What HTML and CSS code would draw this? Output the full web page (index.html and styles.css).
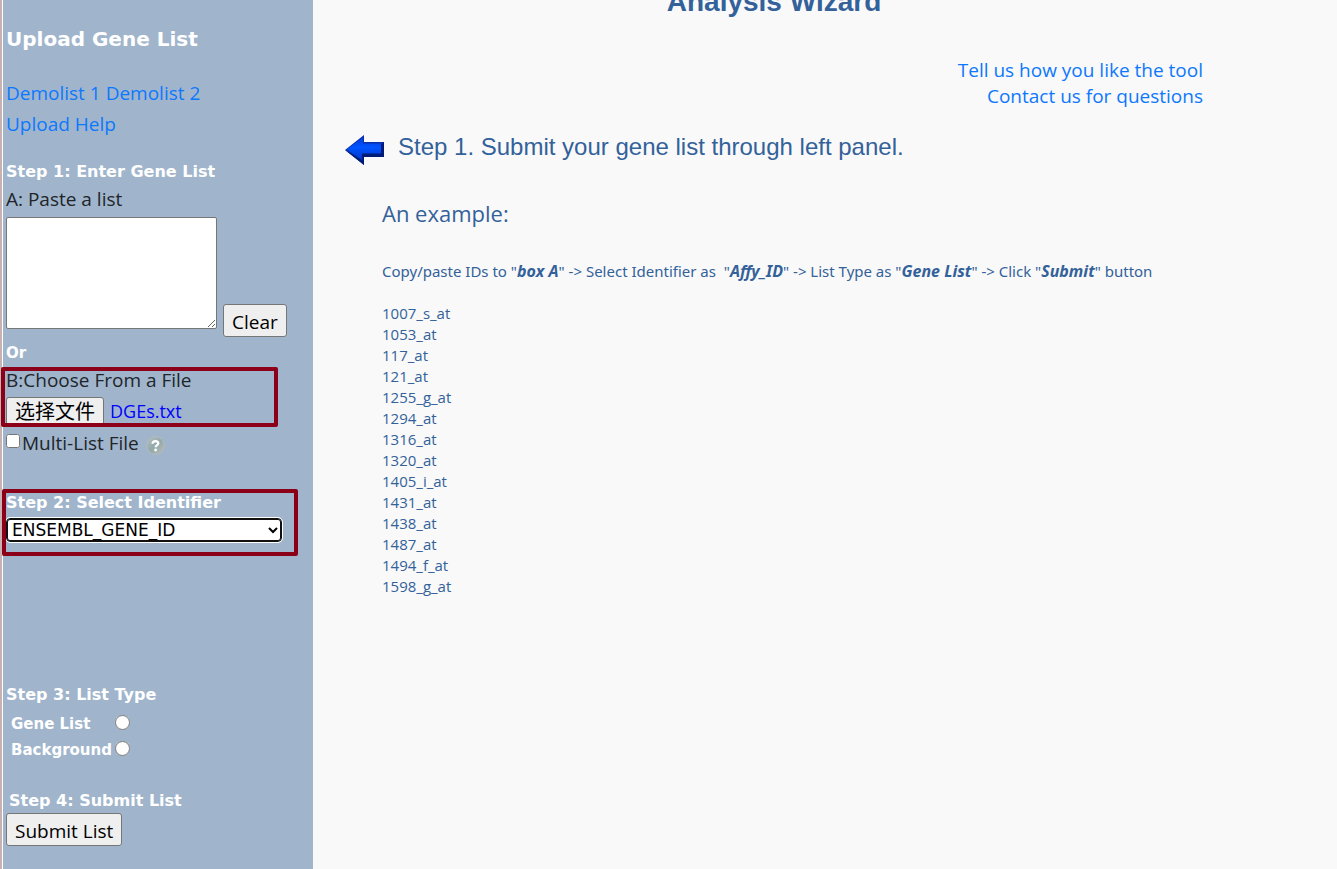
FILE: index.html
```html
<!DOCTYPE html>
<html lang="en">
<head>
<meta charset="utf-8">
<title>Analysis Wizard</title>
<link rel="stylesheet" href="styles.css">
</head>
<body>
<div class="layout">
  <form class="sidebar">
    <h2 class="sidebar-title">Upload Gene List</h2>
    <nav class="help-links">
      <div><a href="#demo1">Demolist 1</a> <a href="#demo2">Demolist 2</a></div>
      <div><a href="#help">Upload Help</a></div>
    </nav>

    <section>
      <h3 class="step">Step 1: Enter Gene List</h3>
      <label class="field-label" for="paste">A: Paste a list</label>
      <div class="paste-row">
        <textarea class="paste-box" id="paste"></textarea>
        <button class="button" type="reset">Clear</button>
      </div>
      <h3 class="step or">Or</h3>
      <div class="marked marked-file">
        <div class="field-label">B:Choose From a File</div>
        <div class="file-row">
          <label class="file-button">选择文件<input class="file-input" type="file"></label>
          <span class="file-name">DGEs.txt</span>
        </div>
      </div>
      <div class="multi-row">
        <input class="check" type="checkbox" id="multi">
        <label for="multi">Multi-List File</label>
        <svg class="help-icon" viewBox="0 0 19 19" aria-hidden="true">
          <defs><linearGradient id="g" x1="0" y1="0" x2="1" y2="1"><stop offset="0" stop-color="#b5c3c4"/><stop offset=".5" stop-color="#93a8aa"/><stop offset="1" stop-color="#bcbfba"/></linearGradient></defs>
          <circle cx="9.5" cy="9.5" r="8.8" fill="url(#g)" stroke="#b4bcbc"/>
          <path d="M6.6 7.8C6.6 4.2 12.5 4.4 12.3 7.5C12.2 9.2 9.6 9.2 9.6 11.3" fill="none" stroke="#fff" stroke-width="2.3"/>
          <circle cx="9.6" cy="14" r="1.4" fill="#fff"/>
        </svg>
      </div>
    </section>

    <section class="marked marked-identifier">
      <h3 class="step"><label for="identifier">Step 2: Select Identifier</label></h3>
      <select class="identifier" id="identifier"><option>ENSEMBL_GENE_ID</option></select>
    </section>

    <section class="list-type">
      <h3 class="step">Step 3: List Type</h3>
      <div class="radio-grid">
        <label for="genelist">Gene List</label><input class="radio" type="radio" name="type" id="genelist">
        <label for="background">Background</label><input class="radio" type="radio" name="type" id="background">
      </div>
    </section>

    <section class="submit">
      <h3 class="step step-submit">Step 4: Submit List</h3>
      <button class="button" type="button">Submit List</button>
    </section>
  </form>

  <main class="main">
    <h1 class="title">Analysis Wizard</h1>
    <div class="contact">
      <div><a href="#feedback">Tell us how you like the tool</a></div>
      <div><a href="#contact">Contact us for questions</a></div>
    </div>
    <div class="instruction">
      <svg class="arrow" viewBox="0 0 39 30" aria-hidden="true">
        <defs>
          <linearGradient id="shaft" x1="0" y1="0" x2="0" y2="1"><stop offset="0" stop-color="#0038d8"/><stop offset=".45" stop-color="#0054ff"/><stop offset="1" stop-color="#0034c8"/></linearGradient>
        </defs>
        <path d="M0 15L19 0V7H39V22H19V30Z" fill="#0a2fa8"/>
        <path d="M0 15L19 30V22H39V7L35 10V18H17V25Z" fill="#001c78"/>
        <path d="M2 14.5L18 2V8.5H36V18.5H17V25Z" fill="url(#shaft)"/>
      </svg>
      <h2 class="instruction-text">Step 1. Submit your gene list through left panel.</h2>
    </div>
    <section class="example">
      <h3 class="example-title">An example:</h3>
      <p class="example-text">Copy/paste IDs to "<b><i>box A</i></b>" -&gt; Select Identifier as &nbsp;"<b><i>Affy_ID</i></b>" -&gt; List Type as "<b><i>Gene List</i></b>" -&gt; Click "<b><i>Submit</i></b>" button</p>
      <ul class="ids">
        <li>1007_s_at</li><li>1053_at</li><li>117_at</li><li>121_at</li><li>1255_g_at</li><li>1294_at</li><li>1316_at</li><li>1320_at</li><li>1405_i_at</li><li>1431_at</li><li>1438_at</li><li>1487_at</li><li>1494_f_at</li><li>1598_g_at</li>
      </ul>
    </section>
  </main>
</div>
</body>
</html>
```
FILE: styles.css
```css
* { box-sizing: border-box; }
body {
  margin: 0;
  background: #f9f9f9;
  color: #212529;
  font: 19px/30px "Open Sans", "Noto Sans CJK SC", sans-serif;
}
h1, h2, h3, p, ul { margin: 0; padding: 0; }
a { color: #0d78fd; text-decoration: none; }
.layout { display: flex; min-height: 100vh; }

.sidebar {
  flex: 0 0 313px;
  padding: 24px 0 16px 4px;
  border-left: 2px solid #c8b1b1;
  box-shadow: inset 1px 0 #fff;
  background: #a0b5cc;
}
.sidebar-title { color: #fff; font: bold 20px/30px "DejaVu Sans", sans-serif; }
.help-links { margin: 24px 0 20px; line-height: 31px; }
.step { color: #fff; font: bold 16px/24px "DejaVu Sans", sans-serif; }
.field-label { display: block; }
.paste-row { display: flex; gap: 6px; min-height: 120px; margin: 3px 0 4px; }
.paste-box {
  width: 211px;
  height: 112px;
  border: 1px solid #767676;
  border-radius: 2px;
  background: #fff;
}
.button {
  align-self: flex-end;
  height: 33px;
  padding: 2px 8px 0;
  border: 1px solid #767676;
  border-radius: 3px;
  background: #efefef;
  color: #000;
  font: 19px/28px "Open Sans", sans-serif;
}
.or { font-size: 15px; }
.marked { position: relative; }
.marked::after {
  content: "";
  position: absolute;
  border: 4px solid #8b0018;
  border-radius: 2px;
  pointer-events: none;
}
.marked-file::after { inset: 2px 35px 0 -5px; }
.marked-identifier::after { inset: -2px 15px -14px -4px; }
.file-row { display: flex; align-items: center; gap: 6px; height: 32px; }
.file-button {
  position: relative;
  height: 29px;
  padding: 0 8px;
  border: 1px solid #767676;
  border-radius: 3px;
  background: #efefef;
  color: #000;
  font-size: 20px;
  line-height: 27px;
}
.file-input { position: absolute; inset: 0; width: 100%; opacity: 0; }
.file-name { color: #00f; font-size: 18px; }
.multi-row { display: flex; align-items: center; gap: 2px; height: 32px; }
.check { width: 14px; height: 14px; margin: 0 0 4px; }
.help-icon { width: 19px; height: 19px; margin: 4px 0 0 5px; }

.marked-identifier { margin-top: 32px; }
.identifier {
  display: block;
  width: 276px;
  height: 24px;
  margin-top: 3px;
  padding: 0 1px;
  border: 1px solid #101010;
  border-radius: 4px;
  outline: 1px solid #fff;
  box-shadow: inset 0 0 0 1px #101010;
  background: #fff;
  color: #000;
  font: 17px "DejaVu Sans", sans-serif;
}
.list-type { margin-top: 141px; }
.radio-grid {
  display: grid;
  grid-template-columns: 100px 15px;
  grid-auto-rows: 26px;
  align-items: center;
  gap: 0 4px;
  margin: 4px 0 0 5px;
  color: #fff;
  font: bold 15px/26px "DejaVu Sans", sans-serif;
}
.radio { width: 15px; height: 15px; margin: 0 0 3px; }
.submit { margin-top: 26px; }
.step-submit { padding-left: 3px; }

.main { flex: 1; min-width: 0; display: flow-root; padding: 0 134px 0 32px; color: #336199; }
.title { margin-top: -16px; font: bold 28px/36px "Liberation Sans", sans-serif; text-align: center; }
.contact { margin: 37px 0 26px; line-height: 26px; text-align: right; }
.instruction { display: flex; align-items: flex-start; gap: 14px; }
.arrow { flex: none; width: 39px; height: 30px; }
.instruction-text { font: 24px/24px "Liberation Sans", sans-serif; }
.example { padding-left: 37px; font-size: 15px; line-height: 21px; }
.example-title { margin: 33px 0; font-size: 22px; font-weight: 400; line-height: 30px; }
.example-text { font-family: "Noto Sans", "Open Sans", sans-serif; }
.example-text b { font-size: 16px; }
.ids { margin-top: 21px; list-style: none; }
```
